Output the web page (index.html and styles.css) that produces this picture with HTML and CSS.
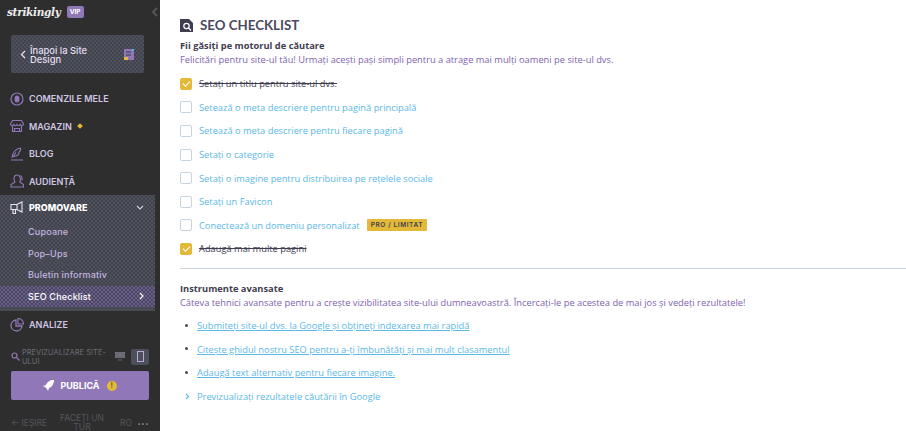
FILE: index.html
```html
<!DOCTYPE html>
<html lang="ro">
<head>
  <meta charset="UTF-8">
  <title>SEO Checklist</title>
  <link rel="stylesheet" href="styles.css">
</head>
<body>
  <aside class="sidebar">
    <div class="brand">
      <span class="logo">strikingly</span>
      <span class="vip">VIP</span>
      <svg class="collapse" width="7" height="10" viewBox="0 0 7 10"><path d="M6 1 2 5l4 4" fill="none" stroke="#55565c" stroke-width="2"/></svg>
    </div>
    <div class="back dotted">
      <svg width="6" height="9" viewBox="0 0 6 9"><path d="M5 1 1.500 4.500 5 8" fill="none" stroke="#e6e2f0" stroke-width="1.300"/></svg>
      <span class="back-text">Înapoi la Site Design</span>
      <svg width="10" height="11" viewBox="0 0 10 11"><path d="M0 0h7l3 3v8H0z" fill="#9077b8"/><path d="M0 8h4v3H0z" fill="#e3b93a"/><path d="M2 3h5M2 6h5" stroke="#3a3a44"/><path d="M8 0h2v2H8z" fill="#5cb8e6"/></svg>
    </div>
    <nav class="nav">
      <a class="nav-item">
        <svg class="nav-icon" viewBox="0 0 14 14"><circle cx="7" cy="7" r="6" fill="none" stroke="#9077b8" stroke-width="1.200"/><ellipse cx="7" cy="7" rx="2.500" ry="3.500" fill="#9077b8"/></svg>
        <span>COMENZILE MELE</span>
      </a>
      <a class="nav-item">
        <svg class="nav-icon" viewBox="0 0 14 14"><path d="M2.500 1.500h9l2 3.500c0 2-2.500 2-3.200.5-.7 1.500-2.600 1.500-3.300 0-.7 1.500-2.600 1.500-3.300 0-.7 1.500-3.200 1.500-3.200-.5zM2.500 7v5.500h9V7M4.500 12.500V9.500h5v3" fill="none" stroke="#9077b8" stroke-width="1.100"/></svg>
        <span>MAGAZIN</span><i class="dot"></i>
      </a>
      <a class="nav-item">
        <svg class="nav-icon" viewBox="0 0 14 14"><path d="M2 10.500C2 6 6 1.500 10.500 1c.5 2-.5 3.500-1.500 4.200 0 2-2 4-5 4.300M2.500 10.500 6 5.500M1 13h12" fill="none" stroke="#9077b8" stroke-width="1.100"/></svg>
        <span>BLOG</span>
      </a>
      <a class="nav-item">
        <svg class="nav-icon" viewBox="0 0 14 14"><path d="M5 8C3.500 6 3.500 1 7 1s4 4.500 2.800 7l3.700 2.500V13H1v-2.500zM10.200 1.500c2 .5 2.300 3.500 1.500 5" fill="none" stroke="#9077b8" stroke-width="1.100"/></svg>
        <span>AUDIENȚĂ</span>
      </a>
      <div class="promo dotted">
        <a class="nav-item nav-open">
          <svg class="nav-icon" viewBox="0 0 14 14"><path d="M1 3.500h6L12 1v10L7 8.500H1zM3 8.500V12.500h2.500v-4M7 3.500v5" fill="none" stroke="#e8e4f2" stroke-width="1.100"/></svg>
          <span>PROMOVARE</span>
          <svg class="chevron" width="8" height="5" viewBox="0 0 8 5"><path d="M1 1l3 3 3-3" fill="none" stroke="#d5d5dc" stroke-width="1.100"/></svg>
        </a>
        <a class="sub-item">Cupoane</a>
        <a class="sub-item">Pop–Ups</a>
        <a class="sub-item">Buletin informativ</a>
        <a class="sub-item sub-active">SEO Checklist
          <svg width="5" height="8" viewBox="0 0 5 8"><path d="M1 1l3 3-3 3" fill="none" stroke="#fff" stroke-width="1.100"/></svg>
        </a>
      </div>
      <a class="nav-item">
        <svg class="nav-icon" viewBox="0 0 14 14"><path d="M6 2a5.500 5.500 0 1 0 6 6H6z" fill="none" stroke="#9077b8" stroke-width="1.300"/><path d="M8 .5a5.500 5.500 0 0 1 5.500 5.500H8z" fill="none" stroke="#9077b8" stroke-width="1.100"/></svg>
        <span>ANALIZE</span>
      </a>
    </nav>
    <div class="preview">
      <svg width="9" height="9" viewBox="0 0 9 9"><circle cx="3.500" cy="3.500" r="2.500" fill="none" stroke="#9077b8" stroke-width="1.200"/><path d="M5.500 5.500 8.500 8.500" stroke="#9077b8" stroke-width="1.300"/></svg>
      <span class="preview-text">PREVIZUALIZARE SITE-ULUI</span>
      <svg class="desktop" width="10" height="9" viewBox="0 0 10 9"><path d="M0 0h10v6H0z" fill="#6a6b72"/><path d="M3 8h4" stroke="#6a6b72"/></svg>
      <span class="phone-box"><svg width="7" height="11" viewBox="0 0 7 11"><rect x=".5" y=".5" width="6" height="10" fill="none" stroke="#b9a5dc"/></svg></span>
    </div>
    <button class="publish">
      <svg width="11" height="11" viewBox="0 0 11 11"><path d="M11 0C7 0 4 2 3 5L0 6l2 1 2 2 1 2 1-3c3-1 5-4 5-8z" fill="#fff"/></svg>
      <span>PUBLICĂ</span>
      <span class="warn">!</span>
    </button>
    <div class="foot">
      <span class="exit">← IEȘIRE</span>
      <span class="tour">FACEȚI UN TUR</span>
      <span class="lang">RO</span>
      <span class="more">•••</span>
    </div>
  </aside>
  <main class="main">
    <h1 class="title">
      <svg width="13" height="13" viewBox="0 0 13 13"><path d="M0 0h9l4 4v9H0z" fill="#3f3d50"/><circle cx="6.500" cy="7" r="2.700" fill="none" stroke="#fff" stroke-width="1.200"/><path d="M8.500 9 11 11.500" stroke="#fff" stroke-width="1.300"/></svg>
      SEO CHECKLIST
    </h1>
    <h2 class="heading">Fii găsiți pe motorul de căutare</h2>
    <p class="lead">Felicitări pentru site-ul tău! Urmați acești pași simpli pentru a atrage mai mulți oameni pe site-ul dvs.</p>
    <ul class="checks">
      <li class="check done"><i class="box"></i><span>Setați un titlu pentru site-ul dvs.</span></li>
      <li class="check"><i class="box"></i><span>Setează o meta descriere pentru pagină principală</span></li>
      <li class="check"><i class="box"></i><span>Setează o meta descriere pentru fiecare pagină</span></li>
      <li class="check"><i class="box"></i><span>Setați o categorie</span></li>
      <li class="check"><i class="box"></i><span>Setați o imagine pentru distribuirea pe rețelele sociale</span></li>
      <li class="check"><i class="box"></i><span>Setați un Favicon</span></li>
      <li class="check"><i class="box"></i><span>Conectează un domeniu personalizat</span><b class="tag">PRO / LIMITAT</b></li>
      <li class="check done"><i class="box"></i><span>Adaugă mai multe pagini</span></li>
    </ul>
    <hr class="rule">
    <h2 class="heading">Instrumente avansate</h2>
    <p class="lead">Câteva tehnici avansate pentru a crește vizibilitatea site-ului dumneavoastră. Încercați-le pe acestea de mai jos și vedeți rezultatele!</p>
    <ul class="links">
      <li><a href="#">Submiteți site-ul dvs. la Google și obțineți indexarea mai rapidă</a></li>
      <li><a href="#">Citește ghidul nostru SEO pentru a-ți îmbunătăți și mai mult clasamentul</a></li>
      <li><a href="#">Adaugă text alternativ pentru fiecare imagine.</a></li>
      <li class="more-link">
        <svg width="5" height="7" viewBox="0 0 5 7"><path d="M1 1l2.500 2.500L1 6" fill="none" stroke="#5bb8e8" stroke-width="1.200"/></svg>
        <span>Previzualizați rezultatele căutării în Google</span>
      </li>
    </ul>
  </main>
</body>
</html>
```

FILE: styles.css
```css
* {
  margin: 0;
  padding: 0;
  box-sizing: border-box;
}

html, body {
  height: 431px;
  overflow: hidden;
}

body {
  display: flex;
  background: #fff;
  font-family: 'Open Sans', sans-serif;
}

.dotted {
  background-color: #4e515c;
  background-image:
    radial-gradient(circle, #33343c 0.6px, transparent 0.8px),
    radial-gradient(circle, #33343c 0.6px, transparent 0.8px);
  background-size: 4px 4px;
  background-position: 0 0, 2px 2px;
}

.sidebar {
  width: 160px;
  height: 431px;
  flex-shrink: 0;
  background: #2e2e2e;
  color: #c9bfe0;
  font-family: Inter, sans-serif;
  display: flex;
  flex-direction: column;
  padding-right: 5px;
}

.sidebar > * {
  flex-shrink: 0;
}

.brand {
  height: 35px;
  padding: 1px 0 0 7px;
  display: flex;
  align-items: center;
  gap: 6px;
}

.logo {
  font-family: 'DejaVu Serif', serif;
  font-style: italic;
  font-weight: 700;
  font-size: 10.500px;
  letter-spacing: -0.3px;
  color: #eee;
  margin-top: -13px;
}

.vip {
  background: #9077b8;
  color: #fff;
  font-size: 6.500px;
  font-weight: 700;
  padding: 2px 3px;
  border-radius: 2px;
  margin-top: -13px;
}

.collapse {
  margin-left: auto;
  margin-right: -3px;
  margin-top: -13px;
}

.back {
  margin-left: 11px;
  width: 133px;
  height: 38px;
  border-radius: 2px;
  display: flex;
  align-items: center;
  padding: 0 10px 0 9px;
  gap: 4px;
  color: #e3def0;
  font-size: 9.400px;
  font-weight: 500;
  line-height: 9px;
}

.back-text {
  flex: 1;
  padding-top: 2px;
  padding-right: 18px;
}

.nav {
  margin-top: 12px;
}

.nav-item {
  height: 27.500px;
  display: flex;
  align-items: center;
  gap: 5px;
  padding-left: 10px;
  font-size: 9px;
  font-weight: 600;
  color: #cfc6e4;
}

.nav-icon {
  width: 14px;
  height: 14px;
  flex-shrink: 0;
}

.dot {
  width: 4px;
  height: 4px;
  background: #e3b93a;
  transform: rotate(45deg);
  margin-left: 1px;
}

.promo {
  height: 116px;
}

.nav-open {
  height: 25px;
  margin-bottom: 1px;
  color: #fff;
  font-weight: 800;
}

.chevron {
  margin-left: auto;
  margin-right: 11px;
}

.sub-item {
  height: 21.500px;
  display: flex;
  align-items: center;
  padding-left: 28px;
  padding-right: 11px;
  font-size: 9px;
  font-weight: 500;
  letter-spacing: 0.2px;
  color: #c3b4e0;
}

.sub-active {
  height: 21px;
  justify-content: space-between;
  color: #fff;
  background-color: #4a4760;
  background-image:
    radial-gradient(circle, #9077b8 0.6px, transparent 0.8px),
    radial-gradient(circle, #9077b8 0.6px, transparent 0.8px);
  background-size: 4px 4px;
  background-position: 0 0, 2px 2px;
}

.preview {
  margin-top: 10px;
  padding: 0 0 0 11px;
  display: flex;
  align-items: center;
  height: 16px;
  font-size: 7.500px;
  line-height: 9px;
  color: #6d6d76;
}

.preview-text {
  flex: 1;
  margin-left: 2px;
}

.desktop {
  margin: 0 6px;
}

.phone-box {
  width: 18px;
  height: 16px;
  margin-right: 6px;
  background: #4c505b;
  border-radius: 2px;
  display: flex;
  align-items: center;
  justify-content: center;
}

.publish {
  margin: 6.500px 0 0 11px;
  width: 138px;
  height: 29px;
  background: #9077b8;
  border: 0;
  border-radius: 2px;
  display: flex;
  align-items: center;
  justify-content: center;
  gap: 6px;
  color: #fff;
  font-family: Inter, sans-serif;
  font-size: 9px;
  font-weight: 700;
}

.warn {
  width: 10px;
  height: 10px;
  border-radius: 50%;
  background: #e3b93a;
  color: #6d5a20;
  font-size: 7px;
  line-height: 10px;
  text-align: center;
  margin-left: 1px;
}

.foot {
  margin-top: 14px;
  padding: 0 6px 0 11px;
  display: flex;
  align-items: center;
  font-size: 8.500px;
  line-height: 9px;
  color: #55555c;
}

.exit {
  width: 38px;
  white-space: nowrap;
}

.tour {
  width: 46px;
  margin-left: 10px;
  text-align: center;
}

.lang {
  margin-left: 15px;
}

.more {
  margin-left: auto;
  font-size: 6px;
  color: #8d8d96;
  letter-spacing: 0.5px;
}

.main {
  flex: 1;
  padding: 17px 0 0 20px;
  font-size: 9.300px;
}

.title {
  display: flex;
  align-items: center;
  gap: 7px;
  font-family: Lato, sans-serif;
  font-size: 13.300px;
  font-weight: 700;
  line-height: 16px;
  color: #4b4860;
  margin-bottom: 6px;
}

.heading {
  font-size: 9.300px;
  font-weight: 700;
  line-height: 13px;
  color: #3f3d50;
}

.lead {
  line-height: 15px;
  color: #7e62b0;
}

.checks {
  list-style: none;
  margin-top: 5px;
}

.check {
  height: 23.600px;
  display: flex;
  align-items: center;
  gap: 7px;
  color: #5bb8e8;
}

.box {
  width: 12px;
  height: 12px;
  border: 1px solid #c6d4e0;
  border-radius: 2px;
  flex-shrink: 0;
}

.done .box {
  background: #e3b93a;
  border-color: #e3b93a;
  position: relative;
}

.done .box::after {
  content: "";
  position: absolute;
  left: 2px;
  top: 2px;
  width: 6px;
  height: 3px;
  border-left: 1.500px solid #fff;
  border-bottom: 1.500px solid #fff;
  transform: rotate(-45deg);
}

.done span {
  color: #3f3d50;
  text-decoration: line-through;
}

.tag {
  background: #e3b93a;
  color: #3f3d50;
  font-family: Inter, sans-serif;
  font-size: 6.500px;
  font-weight: 600;
  letter-spacing: 0.6px;
  padding: 2px 4px;
  border-radius: 1px;
}

.rule {
  border: 0;
  border-top: 1px solid #cdd6df;
  margin: 7px 0 13px;
}

.links {
  list-style: none;
  margin-top: 4px;
}

.links li {
  height: 23.500px;
  display: flex;
  align-items: center;
  padding-left: 17px;
  position: relative;
  color: #5bb8e8;
}

.links a {
  color: #5bb8e8;
}

.links li:not(.more-link)::before {
  content: "";
  position: absolute;
  left: 5px;
  top: 10px;
  width: 3px;
  height: 3px;
  border-radius: 50%;
  background: #4b4860;
}

.more-link svg {
  position: absolute;
  left: 5px;
}
```
